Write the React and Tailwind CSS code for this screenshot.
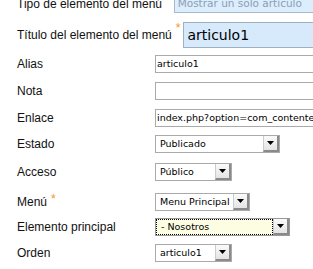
import React from "react";

const label = { fontFamily: "'Liberation Sans', Arial, sans-serif" };
const sans = { fontFamily: "'DejaVu Sans', sans-serif" };

const Star = () => <span className="text-[#f7931e] text-[12px] self-start ml-[4px] leading-none" style={label}>*</span>;

const Arrow = () => (
  <div className="w-[16px] self-stretch flex items-center justify-center bg-gradient-to-b from-[#fafafa] to-[#e4e4e4] border-l border-[#ccc] border-r-2 border-b-2 border-r-[#8a8a8a] border-b-[#8a8a8a]">
    <svg width="7" height="4" viewBox="0 0 7 4"><path d="M0 0h7L3.5 4z" fill="#000" /></svg>
  </div>
);

const Select = ({ value, width, focus }) => (
  <div
    className={`h-[18px] shrink-0 flex items-stretch border ${focus ? "border-[#999] bg-[#fdfde3]" : "border-[#aaa] bg-white"}`}
    style={{ width, ...sans }}
  >
    <div className={`flex-1 flex items-center pl-[4px] overflow-hidden whitespace-nowrap ${focus ? "border border-dotted border-black" : ""}`}>
      <span className="text-[9.5px] text-black">{value}</span>
    </div>
    <Arrow />
  </div>
);

const Field = ({ value }) => (
  <div className="h-[18px] w-[200px] shrink-0 border border-[#aaa] bg-white flex items-center pl-[1px] overflow-hidden whitespace-nowrap" style={sans}>
    <span className="text-[9.5px] text-black">{value}</span>
  </div>
);

const Row = ({ text, star, children, className = "" }) => (
  <div className={`flex items-center ${className}`}>
    <div className="w-[138px] shrink-0 flex items-center whitespace-nowrap text-[12px] text-[#111]" style={label}>
      <span>{text}</span>
      {star && <Star />}
    </div>
    {children}
  </div>
);

export default function App() {
  return (
    <div className="w-[313px] h-[269px] overflow-hidden bg-white" style={label}>
      <div className="pl-[17px] -mt-[6px] w-[313px]">
        <div className="flex items-center whitespace-nowrap">
          <span className="text-[12px] text-[#111] shrink-0">Tipo de elemento del menú</span>
          <Star />
          <div className="ml-[3px] h-[19px] w-[200px] shrink-0 border border-[#a9b9c9] bg-[#dcedfc] flex items-center pl-[3px]" style={sans}>
            <span className="text-[10.5px] text-[#8aa0b8]">Mostrar un solo articulo</span>
          </div>
        </div>
        <div className="flex items-center whitespace-nowrap mt-[9px]">
          <span className="text-[12px] text-[#111] shrink-0">Título del elemento del menú</span>
          <Star />
          <div className="ml-[3px] h-[26px] w-[200px] shrink-0 border border-[#9fb0c0] bg-[#d6eafc] flex items-center pl-[3px]" style={sans}>
            <span className="text-[14px] text-black">articulo1</span>
          </div>
        </div>
        <Row text="Alias" className="mt-[7px]"><Field value="articulo1" /></Row>
        <Row text="Nota" className="mt-[9px]"><Field value="" /></Row>
        <Row text="Enlace" className="mt-[9px]"><Field value="index.php?option=com_contente" /></Row>
        <Row text="Estado" className="mt-[8px]"><Select value="Publicado" width={125} /></Row>
        <Row text="Acceso" className="mt-[10px]"><Select value="Público" width={77} /></Row>
        <Row text="Menú" star className="mt-[12px]"><Select value="Menu Principal" width={95} /></Row>
        <Row text="Elemento principal" className="mt-[7px]"><Select value="- Nosotros" width={135} focus /></Row>
        <Row text="Orden" className="mt-[8px]"><Select value="articulo1" width={77} /></Row>
      </div>
    </div>
  );
}
